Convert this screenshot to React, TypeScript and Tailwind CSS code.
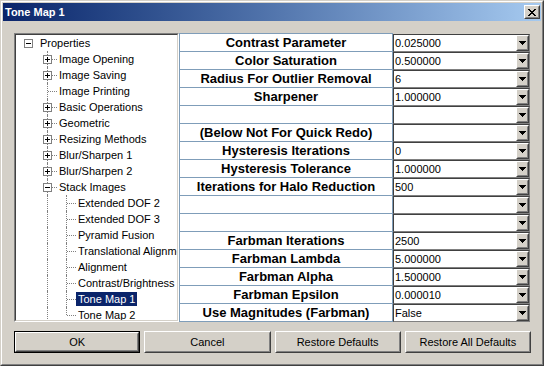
import React from "react"

type TreeItem = {
  label: string
  level: 0 | 1 | 2
  box?: "plus" | "minus"
  selected?: boolean
  last?: boolean
}

const treeItems: TreeItem[] = [
  { label: "Properties", level: 0, box: "minus" },
  { label: "Image Opening", level: 1, box: "plus" },
  { label: "Image Saving", level: 1, box: "plus" },
  { label: "Image Printing", level: 1 },
  { label: "Basic Operations", level: 1, box: "plus" },
  { label: "Geometric", level: 1, box: "plus" },
  { label: "Resizing Methods", level: 1, box: "plus" },
  { label: "Blur/Sharpen 1", level: 1, box: "plus" },
  { label: "Blur/Sharpen 2", level: 1, box: "plus" },
  { label: "Stack Images", level: 1, box: "minus" },
  { label: "Extended DOF 2", level: 2 },
  { label: "Extended DOF 3", level: 2 },
  { label: "Pyramid Fusion", level: 2 },
  { label: "Translational Alignment", level: 2 },
  { label: "Alignment", level: 2 },
  { label: "Contrast/Brightness", level: 2 },
  { label: "Tone Map 1", level: 2, selected: true },
  { label: "Tone Map 2", level: 2, last: true },
]

const params = [
  { label: "Contrast Parameter", value: "0.025000" },
  { label: "Color Saturation", value: "0.500000" },
  { label: "Radius For Outlier Removal", value: "6" },
  { label: "Sharpener", value: "1.000000" },
  { label: "", value: "" },
  { label: "(Below Not For Quick Redo)", value: "" },
  { label: "Hysteresis Iterations", value: "0" },
  { label: "Hysteresis Tolerance", value: "1.000000" },
  { label: "Iterations for Halo Reduction", value: "500" },
  { label: "", value: "" },
  { label: "", value: "" },
  { label: "Farbman Iterations", value: "2500" },
  { label: "Farbman Lambda", value: "5.000000" },
  { label: "Farbman Alpha", value: "1.500000" },
  { label: "Farbman Epsilon", value: "0.000010" },
  { label: "Use Magnitudes (Farbman)", value: "False" },
]

const labelPad = { 0: "pl-[22px]", 1: "pl-[41px]", 2: "pl-[60px]" }
const boxLeft = { 0: "left-[8px]", 1: "left-[27px]", 2: "left-[46px]" }

function Raised({ children, className = "" }: { children?: React.ReactNode; className?: string }) {
  return (
    <div className={`border border-t-white border-l-white border-r-[#404040] border-b-[#404040] ${className}`}>
      <div className="w-full h-full border border-t-[#d4d0c8] border-l-[#d4d0c8] border-r-[#808080] border-b-[#808080] flex items-center justify-center">
        {children}
      </div>
    </div>
  )
}

function ExpandBox({ kind, level }: { kind: "plus" | "minus"; level: 0 | 1 | 2 }) {
  return (
    <span className={`absolute ${boxLeft[level]} top-[4px] w-[9px] h-[9px] border border-[#808080] bg-white`}>
      <span className="absolute left-[1px] top-[3px] w-[5px] h-[1px] bg-black" />
      {kind === "plus" && <span className="absolute left-[3px] top-[1px] w-[1px] h-[5px] bg-black" />}
    </span>
  )
}

function TreeRow({ item, index }: { item: TreeItem; index: number }) {
  return (
    <div className={`relative h-[16px] flex items-center ${labelPad[item.level]}`}>
      {index > 0 && <span className="absolute left-[31px] top-0 h-[16px] border-l border-dotted border-[#808080]" />}
      {item.level === 2 && (
        <span
          className={`absolute left-[50px] top-0 border-l border-dotted border-[#808080] ${item.last ? "h-[8px]" : "h-[16px]"}`}
        />
      )}
      {item.level === 1 && <span className="absolute left-[32px] top-[8px] w-[9px] border-t border-dotted border-[#808080]" />}
      {item.level === 2 && <span className="absolute left-[51px] top-[8px] w-[9px] border-t border-dotted border-[#808080]" />}
      {item.box && <ExpandBox kind={item.box} level={item.level} />}
      <span
        className={`relative px-[2px] leading-[14px] text-[11px] whitespace-nowrap ${
          item.selected ? "bg-[#0a246a] text-white" : "text-black"
        }`}
      >
        {item.label}
      </span>
    </div>
  )
}

function Combo({ value }: { value: string }) {
  return (
    <div className="w-[137px] h-[18px] flex border border-t-[#404040] border-l-[#404040] border-r-[#808080] border-b-[#808080] bg-white">
      <div className="flex-1 flex items-center pl-[1px] text-[11px] text-black leading-none">{value}</div>
      <Raised className="w-[13px] h-[16px] bg-[#d4d0c8]">
        <svg width="7" height="4" viewBox="0 0 7 4" shapeRendering="crispEdges">
          <rect x="0" y="0" width="7" height="1" fill="#000" />
          <rect x="1" y="1" width="5" height="1" fill="#000" />
          <rect x="2" y="2" width="3" height="1" fill="#000" />
          <rect x="3" y="3" width="1" height="1" fill="#000" />
        </svg>
      </Raised>
    </div>
  )
}

export default function App() {
  return (
    <div className="w-[544px] h-[366px] bg-[#d4d0c8] font-['Liberation_Sans',Arial,sans-serif] border border-t-[#d4d0c8] border-l-[#d4d0c8] border-r-[#404040] border-b-[#404040]">
      <div className="w-full h-full border border-t-white border-l-white border-r-[#808080] border-b-[#808080] p-[1px] flex flex-col">
        {/* title bar */}
        <div className="h-[18px] flex items-center justify-between pl-[2px] pr-[1px] bg-linear-to-r from-[#0a246a] to-[#a6caf0]">
          <span className="text-white font-bold text-[11px] leading-none">Tone Map 1</span>
          <Raised className="w-[16px] h-[14px] bg-[#d4d0c8]">
            <svg width="8" height="7" viewBox="0 0 8 7" shapeRendering="crispEdges">
              <path d="M0 0h2v1h-2zM6 0h2v1h-2zM1 1h2v1h-2zM5 1h2v1h-2zM2 2h4v1h-4zM3 3h2v1h-2zM2 4h4v1h-4zM1 5h2v1h-2zM5 5h2v1h-2zM0 6h2v1h-2zM6 6h2v1h-2z" fill="#000" />
            </svg>
          </Raised>
        </div>

        <div className="px-[11px] pt-[12px]">
          <div className="flex h-[289px]">
            {/* tree */}
            <div className="w-[165px] h-full border border-t-[#808080] border-l-[#808080] border-r-white border-b-white">
              <div className="w-full h-full border border-t-[#404040] border-l-[#404040] border-r-[#d4d0c8] border-b-[#d4d0c8] bg-white overflow-hidden">
                {treeItems.map((item, i) => (
                  <TreeRow key={item.label} item={item} index={i} />
                ))}
              </div>
            </div>

            {/* property grid */}
            <div className="flex">
              <div className="w-[214px] border-t border-l border-r border-[#7f9db9] bg-white self-start">
                {params.map((p, i) => (
                  <div
                    key={i}
                    className="h-[18px] border-b border-[#7f9db9] flex items-center justify-center overflow-hidden whitespace-nowrap text-[13px] font-bold text-black leading-none"
                  >
                    {p.label}
                  </div>
                ))}
              </div>
              <div className="pt-[1px] flex flex-col">
                {params.map((p, i) => (
                  <Combo key={i} value={p.value} />
                ))}
              </div>
            </div>
          </div>

          {/* buttons */}
          <div className="mt-[9px] w-[517px] grid grid-cols-4 gap-[4px] text-[11px] text-black">
            <div className="h-[22px] border border-black">
              <Raised className="w-full h-full">OK</Raised>
            </div>
            <Raised className="h-[22px]">Cancel</Raised>
            <Raised className="h-[22px]">Restore Defaults</Raised>
            <Raised className="h-[22px]">Restore All Defaults</Raised>
          </div>
        </div>
      </div>
    </div>
  )
}
